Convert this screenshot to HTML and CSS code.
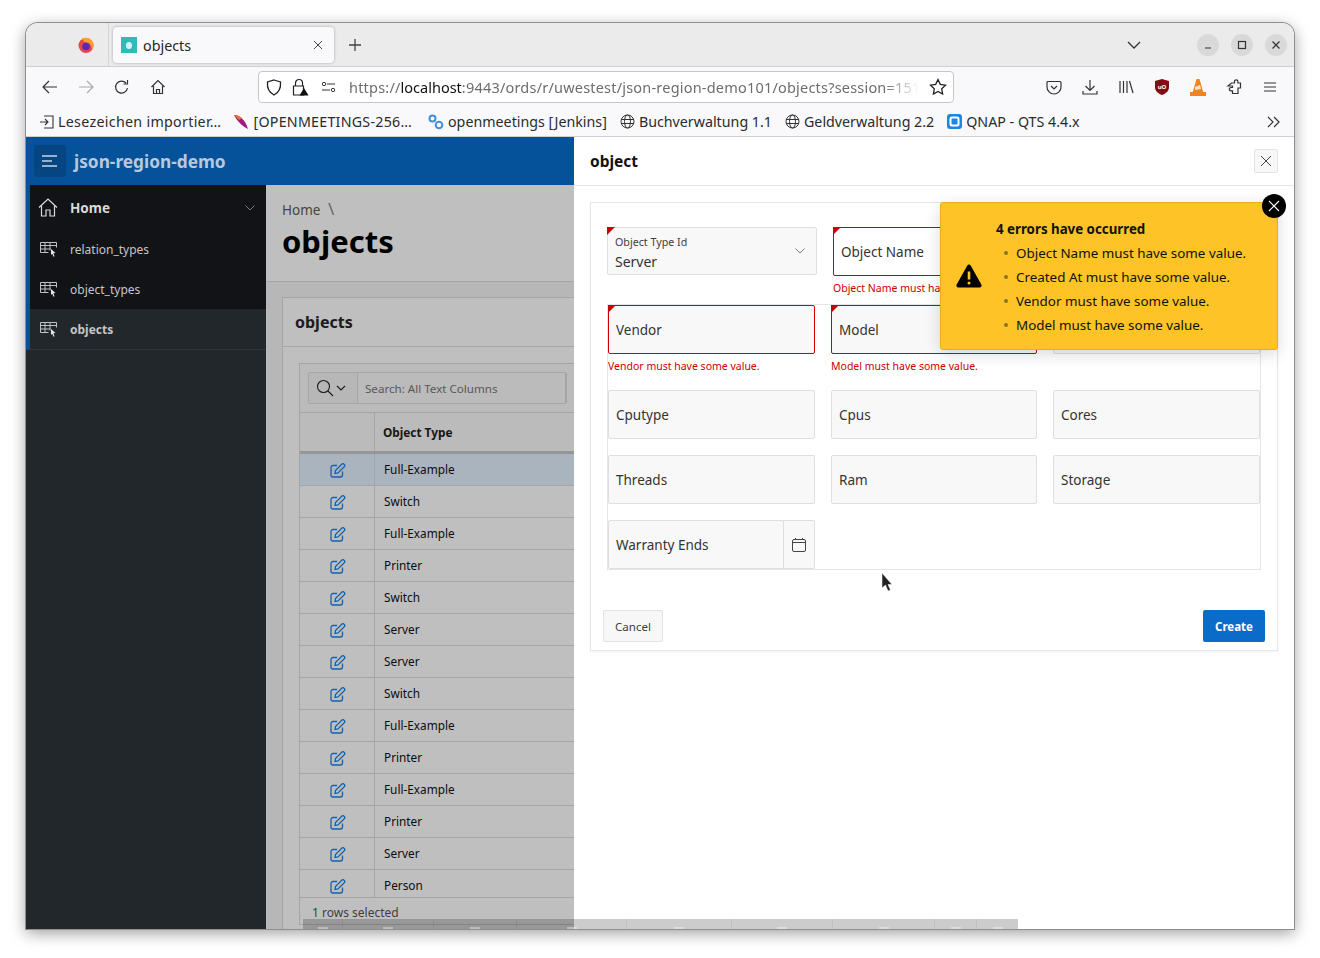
FILE: index.html
```html
<!DOCTYPE html>
<html>
 <head>
  <meta charset="utf-8">
  <title>objects</title>
  <link rel="stylesheet" href="styles.css">
 </head>
 <body>
  <div class="window">

   <div class="tabbar">
    <div class="tab-first">
     <svg width="18" height="18" viewBox="0 0 18 18"><circle cx="9" cy="9.500" r="7.500" fill="#e5474f"/><path d="M5 2.500c4-2 9-.5 11 4 1 3 .5 5.500-1 7.500 0-4-2-7-5-7.500-2-.3-4-1-5-4z" fill="#ff9f2e"/><circle cx="9" cy="10.500" r="3.800" fill="#5a2bb0"/></svg>
    </div>
    <div class="tab">
     <span class="favicon"><span class="favicon-dot"></span></span>
     <span class="tab-title">objects</span>
     <svg width="10" height="10" viewBox="0 0 10 10"><path d="M1 1l8 8M9 1l-8 8" stroke="#444" fill="none"/></svg>
    </div>
    <svg class="tab-plus" width="14" height="14" viewBox="0 0 14 14"><path d="M7 1v12M1 7h12" stroke="#444" stroke-width="1.300" fill="none"/></svg>
    <div class="grow"></div>
    <svg class="tab-list" width="14" height="8" viewBox="0 0 14 8"><path d="M1 1l6 6 6-6" stroke="#333" stroke-width="1.300" fill="none"/></svg>
    <div class="wm">
     <span class="wm-btn"><svg width="10" height="10" viewBox="0 0 10 10"><path d="M2 8h6" stroke="#333" stroke-width="1.200"/></svg></span>
     <span class="wm-btn"><svg width="10" height="10" viewBox="0 0 10 10"><rect x="1.500" y="1.500" width="7" height="7" stroke="#333" stroke-width="1.200" fill="none"/></svg></span>
     <span class="wm-btn"><svg width="10" height="10" viewBox="0 0 10 10"><path d="M1.500 1.500l7 7M8.500 1.500l-7 7" stroke="#333" stroke-width="1.200"/></svg></span>
    </div>
   </div>

   <div class="navbar">
    <svg width="16" height="14" viewBox="0 0 16 14"><path d="M15 7H2M7 1L1 7l6 6" stroke="#333" stroke-width="1.200" fill="none"/></svg>
    <svg width="16" height="14" viewBox="0 0 16 14"><path d="M1 7h13M9 1l6 6-6 6" stroke="#aaa" stroke-width="1.200" fill="none"/></svg>
    <svg width="16" height="16" viewBox="0 0 16 16"><path d="M13.500 9a6 6 0 1 1-1.500-5M13.500 1v4h-4" stroke="#333" stroke-width="1.200" fill="none"/></svg>
    <svg width="16" height="16" viewBox="0 0 16 16"><path d="M1.500 8L8 1.500 14.500 8M3.500 7v7.500h9V7M6.500 14.500v-4h3v4" stroke="#333" stroke-width="1.200" fill="none"/></svg>
    <div class="urlbar">
     <svg width="16" height="17" viewBox="0 0 16 17"><path d="M8 1l6.500 2c.5 6-1.500 10.500-6.500 13C3 13.500 1 9 1.500 3z" stroke="#222" stroke-width="1.300" fill="none"/></svg>
     <svg width="17" height="18" viewBox="0 0 17 18"><path d="M3.500 8V5a3.500 3.500 0 0 1 7 0v3M1.500 8h10v9h-10z" stroke="#222" stroke-width="1.200" fill="none"/><path d="M12 10l4.500 7.500h-9z" fill="#111"/></svg>
     <svg class="perm" width="15" height="10" viewBox="0 0 15 10"><path d="M6 2h8M1 8h8" stroke="#333" stroke-width="1.200"/><circle cx="3" cy="2" r="1.700" stroke="#333" fill="none"/><circle cx="12" cy="8" r="1.700" stroke="#333" fill="none"/></svg>
     <div class="url"><span class="url-dim">https://</span>localhost<span class="url-dim">:9443/ords/r/uwestest/json-region-demo101/objects?session=151</span></div>
     <svg width="18" height="18" viewBox="0 0 18 18"><path d="M9 1.500l2.300 4.900 5.200.7-3.800 3.700.9 5.300L9 13.500l-4.600 2.600.9-5.300L1.500 7.100l5.200-.7z" stroke="#222" stroke-width="1.300" fill="none"/></svg>
    </div>
    <div class="nav-right">
     <svg width="16" height="15" viewBox="0 0 16 15"><path d="M2 1.500h12a1 1 0 0 1 1 1V7a7 7 0 0 1-14 0V2.500a1 1 0 0 1 1-1z" stroke="#333" stroke-width="1.200" fill="none"/><path d="M5 6l3 3 3-3" stroke="#333" stroke-width="1.200" fill="none"/></svg>
     <svg width="16" height="16" viewBox="0 0 16 16"><path d="M8 1v10M3.500 7L8 11.500 12.500 7M1 12v3h14v-3" stroke="#333" stroke-width="1.200" fill="none"/></svg>
     <svg width="16" height="14" viewBox="0 0 16 14"><path d="M2 1v12M5.500 1v12M9 1v12M11.500 1l3.500 12" stroke="#333" stroke-width="1.200" fill="none"/></svg>
     <svg class="nr-narrow" width="14" height="16" viewBox="0 0 14 16"><path d="M7 0l7 2v6c0 4-3 6.500-7 8-4-1.500-7-4-7-8V2z" fill="#800f14"/><text x="7" y="9.500" class="ublock">uO</text></svg>
     <svg width="16" height="17" viewBox="0 0 16 17"><path d="M6.500 0h3l4 14h-11z" fill="#f58220"/><path d="M5 8l5-2 1 4-6 1z" fill="#fde3c8"/><path d="M0 13h16v4H0z" fill="#f58220"/></svg>
     <svg width="16" height="16" viewBox="0 0 16 16"><path d="M5.500 4h3V2.500a1.700 1.700 0 0 1 3.400 0V4h2.600v5h-2.500v5.500H6.500v-2.600H5a1.700 1.700 0 0 1 0-3.400h1.500V7H2z" stroke="#333" stroke-width="1.200" fill="none"/></svg>
     <svg class="nr-narrow" width="14" height="10" viewBox="0 0 14 10"><path d="M1 1h12M1 5h12M1 9h12" stroke="#333" stroke-width="1.200"/></svg>
    </div>
   </div>

   <div class="bookmarks">
    <div class="bm bm-first">
     <svg width="15" height="14" viewBox="0 0 15 14"><path d="M1 7h8M6 4l3 3-3 3M5 1h9v12H5" stroke="#333" stroke-width="1.100" fill="none"/></svg>
     <span>Lesezeichen importier…</span>
    </div>
    <div class="bm bm-second">
     <svg width="15" height="16" viewBox="0 0 15 16"><path d="M0 1c5 0 11 4 14 14C9 13 3 7 0 1z" fill="#a3197c"/><path d="M0 1c3 0 6 1 8 3L5 6z" fill="#e8772e"/></svg>
     <span>[OPENMEETINGS-256…</span>
    </div>
    <div class="bm">
     <svg width="16" height="16" viewBox="0 0 16 16"><circle cx="4.500" cy="4.500" r="3" stroke="#3f8fe0" stroke-width="2" fill="none"/><circle cx="11" cy="11" r="3.300" stroke="#3f8fe0" stroke-width="2" fill="none"/></svg>
     <span>openmeetings [Jenkins]</span>
    </div>
    <div class="bm">
     <svg class="globe" width="15" height="15" viewBox="0 0 15 15"><circle cx="7.500" cy="7.500" r="6.500"/><ellipse cx="7.500" cy="7.500" rx="3" ry="6.500"/><path d="M1 5.500h13M1 9.500h13"/></svg>
     <span>Buchverwaltung 1.1</span>
    </div>
    <div class="bm">
     <svg class="globe" width="15" height="15" viewBox="0 0 15 15"><circle cx="7.500" cy="7.500" r="6.500"/><ellipse cx="7.500" cy="7.500" rx="3" ry="6.500"/><path d="M1 5.500h13M1 9.500h13"/></svg>
     <span>Geldverwaltung 2.2</span>
    </div>
    <div class="bm">
     <svg width="15" height="15" viewBox="0 0 15 15"><rect width="15" height="15" rx="3" fill="#1a87e8"/><rect x="3.500" y="3.500" width="8" height="8" rx="1.500" stroke="#fff" stroke-width="2" fill="none"/></svg>
     <span>QNAP - QTS 4.4.x</span>
    </div>
    <div class="grow"></div>
    <svg width="14" height="12" viewBox="0 0 14 12"><path d="M1 1l5 5-5 5M7 1l5 5-5 5" stroke="#333" stroke-width="1.200" fill="none"/></svg>
   </div>

   <div class="content">
    <div class="apex">
     <div class="apex-head">
      <span class="burger"><svg width="16" height="12" viewBox="0 0 16 12"><path d="M0 1h15M0 6h10M0 11h15" stroke="#c8d5e2" stroke-width="1.600"/></svg></span>
      <span class="app-name">json-region-demo</span>
     </div>
     <div class="apex-body">
      <div class="sidebar">
       <div class="side-top">
        <div class="side-item side-home">
         <svg width="20" height="19" viewBox="0 0 20 19"><path d="M1 9.500L10 1l9 8.500M3.500 8v10h4.500v-6h4v6h4.500V8" stroke="#d8dadb" stroke-width="1.200" fill="none"/></svg>
         <span class="side-home-label">Home</span>
         <svg class="side-chev" width="10" height="6" viewBox="0 0 10 6"><path d="M.5.500L5 5l4.500-4.500" stroke="#777" fill="none"/></svg>
        </div>
        <div class="side-item">
         <svg class="report" width="17" height="15" viewBox="0 0 17 15"><path d="M.5.500h16M.5 3.500h16M.5 7h10M.5 10.500h8M.5.500v10M5 .5v10M10 .5v8M16.500.5v5"/><path class="cursor" d="M11 7l4.500 4-2 .3 1 3-1 .4-1.200-3-1.300 1.300z"/></svg>
         <span>relation_types</span>
        </div>
        <div class="side-item">
         <svg class="report" width="17" height="15" viewBox="0 0 17 15"><path d="M.5.500h16M.5 3.500h16M.5 7h10M.5 10.500h8M.5.500v10M5 .5v10M10 .5v8M16.500.5v5"/><path class="cursor" d="M11 7l4.500 4-2 .3 1 3-1 .4-1.200-3-1.300 1.300z"/></svg>
         <span>object_types</span>
        </div>
       </div>
       <div class="side-item side-current">
        <svg class="report" width="17" height="15" viewBox="0 0 17 15"><path d="M.5.500h16M.5 3.500h16M.5 7h10M.5 10.500h8M.5.500v10M5 .5v10M10 .5v8M16.500.5v5"/><path class="cursor" d="M11 7l4.500 4-2 .3 1 3-1 .4-1.200-3-1.300 1.300z"/></svg>
        <span>objects</span>
       </div>
      </div>
      <div class="page">
       <div class="page-head">
        <div class="crumb">Home <span class="crumb-sep">\</span></div>
        <h1>objects</h1>
       </div>
       <div class="region">
        <div class="region-head">objects</div>
        <div class="region-body">
         <div class="ig">
          <div class="ig-tools">
           <div class="ig-search">
            <span class="ig-lens">
             <svg width="18" height="18" viewBox="0 0 18 18"><circle cx="7.500" cy="7.500" r="6" stroke="#222" stroke-width="1.100" fill="none"/><path d="M12 12l5 5" stroke="#222" stroke-width="1.100"/></svg>
             <svg width="10" height="6" viewBox="0 0 10 6"><path d="M1 1l4 4 4-4" stroke="#222" stroke-width="1.100" fill="none"/></svg>
            </span>
            <span class="ig-input">Search: All Text Columns</span>
           </div>
          </div>
          <div class="ig-head">
           <div class="c-edit"></div>
           <div class="c-type">Object Type</div>
          </div>
          <div id="rows"></div>
          <div class="ig-foot">1 rows selected</div>
         </div>
        </div>
       </div>
       <div class="scrim"></div>
      </div>
     </div>
    </div>

    <div class="dialog">
     <div class="dialog-head">
      <span class="dialog-title">object</span>
      <span class="dialog-close"><svg width="12" height="12" viewBox="0 0 12 12"><path d="M1 1l10 10M11 1L1 11" stroke="#444" fill="none"/></svg></span>
     </div>
     <div class="dialog-body">
      <div class="card">
       <div class="row-one">
        <div class="field field-select field-req">
         <div class="float-label">Object Type Id</div>
         <div class="float-value">Server</div>
         <svg class="select-chev" width="10" height="6" viewBox="0 0 10 6"><path d="M.5.500L5 5l4.500-4.500" stroke="#777" fill="none"/></svg>
        </div>
        <div class="col-err">
         <div class="field field-white field-bad field-req">Object Name</div>
         <div class="err err-first">Object Name must have some value.</div>
        </div>
       </div>
       <div class="grid-box">
        <div class="grid-row">
         <div class="col-err">
          <div class="field field-bad field-req">Vendor</div>
          <div class="err">Vendor must have some value.</div>
         </div>
         <div class="col-err">
          <div class="field field-bad field-req">Model</div>
          <div class="err">Model must have some value.</div>
         </div>
         <div class="col-err">
          <div class="field"></div>
         </div>
        </div>
        <div class="grid-row">
         <div class="field">Cputype</div>
         <div class="field">Cpus</div>
         <div class="field">Cores</div>
        </div>
        <div class="grid-row">
         <div class="field">Threads</div>
         <div class="field">Ram</div>
         <div class="field">Storage</div>
        </div>
        <div class="grid-row grid-last">
         <div class="date-field">
          <div class="field date-input">Warranty Ends</div>
          <div class="date-btn"><svg width="14" height="14" viewBox="0 0 14 14"><rect x=".5" y="1.500" width="13" height="12" rx="1.500" stroke="#444" fill="none"/><path d="M.5 4.500h13M3.500 0v2M10.500 0v2" stroke="#444" fill="none"/></svg></div>
         </div>
        </div>
       </div>
       <div class="dialog-btns">
        <span class="btn-cancel">Cancel</span>
        <span class="btn-create">Create</span>
       </div>
      </div>
     </div>
    </div>

    <div class="toast">
     <svg class="toast-ico" width="26" height="24" viewBox="0 0 26 24"><path d="M11.300 1.500a2 2 0 0 1 3.400 0l10.600 19a2 2 0 0 1-1.700 3H2.400a2 2 0 0 1-1.700-3z" fill="#000"/><path d="M13 7.500v8" stroke="#fec326" stroke-width="2.600"/><circle cx="13" cy="19" r="1.500" fill="#fec326"/></svg>
     <div class="toast-text">
      <div class="toast-title">4 errors have occurred</div>
      <ul>
       <li>Object Name must have some value.</li>
       <li>Created At must have some value.</li>
       <li>Vendor must have some value.</li>
       <li>Model must have some value.</li>
      </ul>
     </div>
     <span class="toast-close"><svg width="12" height="12" viewBox="0 0 12 12"><path d="M1 1l10 10M11 1L1 11" stroke="#fff" stroke-width="1.200"/></svg></span>
    </div>

    <svg class="pointer" width="12" height="19" viewBox="0 0 12 19"><path d="M1 0v15l3.500-3 2.500 6 2.500-1-2.500-5.500H11z" fill="#222" stroke="#fff" stroke-width=".5"/></svg>

    <div class="float-bar">
     <span class="fb-cell fb-a"><i></i></span><span class="fb-cell fb-b"><i></i></span><span class="fb-cell fb-c"><i></i></span><span class="fb-cell fb-d"><i></i></span><span class="fb-cell fb-e"><i></i></span><span class="fb-cell fb-f"><i></i></span><span class="fb-cell fb-g"><i></i></span><span class="fb-cell fb-h"><i></i></span><span class="fb-cell fb-i"><i></i></span>
    </div>
   </div>
  </div>
  <script src="rows.js"></script>
 </body>
</html>
```

FILE: rows.js
```js
var types = ["Full-Example", "Switch", "Full-Example", "Printer", "Switch", "Server", "Server",
  "Switch", "Full-Example", "Printer", "Full-Example", "Printer", "Server", "Person"];
var box = document.getElementById("rows");
types.forEach(function (t, i) {
  var row = document.createElement("div");
  row.className = i == 0 ? "ig-row ig-row-sel" : "ig-row";
  row.innerHTML = '<div class="c-edit"><svg width="16" height="15" viewBox="0 0 16 15">' +
    '<path d="M7 2.500H3a2 2 0 0 0-2 2V12a2 2 0 0 0 2 2h7.500a2 2 0 0 0 2-2V8.500" stroke="#1f80e6" stroke-width="1.300" fill="none"/>' +
    '<path d="M5.500 7.500L12 1a1.200 1.200 0 0 1 1.800 0l.7.700a1.200 1.200 0 0 1 0 1.800L8 10l-3 .5z" stroke="#1f80e6" stroke-width="1.300" fill="none"/></svg></div>' +
    '<div class="c-type">' + t + '</div>';
  box.appendChild(row);
});
```

FILE: styles.css
```css
* { box-sizing: border-box; }
html, body { margin: 0; height: 100%; background: #fff; overflow: hidden; }
body { padding: 23px 26px 29px; font-family: "Noto Sans", sans-serif; color: #262626; }
svg { display: block; flex: none; }
.grow { flex: 1; }

/* browser window */
.window {
 height: 906px;
 border-radius: 12px 12px 0 0;
 overflow: hidden;
 display: flex;
 flex-direction: column;
 background: #f9f9fb;
 box-shadow: 0 0 0 1px #8f8f8f, 0 4px 16px rgba(0,0,0,.4);
}
.tabbar {
 height: 44px;
 flex: none;
 display: flex;
 align-items: center;
 background: #ebebeb;
 border-bottom: 1px solid #cfcfcf;
}
.tab-first {
 width: 83px; height: 43px;
 display: flex; align-items: center;
 padding-left: 51px;
 border-right: 1px solid #d4d4d4;
}
.tab {
 width: 221px; height: 36px; margin: 1px 0 0 4px;
 display: flex; align-items: center;
 background: #f9f9fb; border-radius: 4px;
 box-shadow: 0 0 3px rgba(0,0,0,.3);
 padding: 0 11px 0 8px;
}
.favicon { width: 16px; height: 16px; background: #2fbcb8; display: flex; align-items: center; justify-content: center; }
.favicon-dot { width: 6px; height: 7px; border-radius: 50%; background: #d8f3f2; }
.tab-title { flex: 1; margin-left: 6px; font-size: 14.300px; }
.tab-plus { margin-left: 14px; }
.tab-list { margin-right: 56px; }
.wm { display: flex; gap: 12px; margin-right: 7px; }
.wm-btn { width: 22px; height: 22px; border-radius: 50%; background: #d9d9d9; display: flex; align-items: center; justify-content: center; }

.navbar {
 height: 37px; flex: none;
 display: flex; align-items: center;
 padding: 3px 0 0 16px;
 gap: 20px;
}
.urlbar {
 width: 696px; height: 32px; margin-left: 72px;
 display: flex; align-items: center; gap: 10px;
 background: #fff; border: 1px solid #c6c6c8; border-radius: 4px;
 padding: 0 6px 0 7px;
}
.perm { margin-left: 2px; margin-right: 3px; }
.url { flex: 1; overflow: hidden; white-space: nowrap; font-size: 14.500px; color: #111; -webkit-mask-image: linear-gradient(to right, #000 94%, transparent); }
.url-dim { color: #6d6d6d; letter-spacing: .2px; }
.nav-right { display: flex; align-items: center; gap: 20px; margin-left: 72px; }
.nr-narrow { margin: 0 1px; }
.ublock { font: bold 6px "Noto Sans", sans-serif; fill: #fff; text-anchor: middle; }

.bookmarks {
 height: 33px; flex: none;
 display: flex; align-items: center;
 padding: 3px 13px 0;
 gap: 13px;
 border-bottom: 1px solid #cfcfcf;
 font-size: 14.250px; color: #2b2b2b;
}
.bm { display: flex; align-items: center; gap: 4px; white-space: nowrap; }
.bm-first span { letter-spacing: .3px; }
.bm-second { margin-right: 3px; }
.bm-second span { letter-spacing: .25px; }
.globe { fill: none; stroke: #333; stroke-width: 1; }

/* page under the dialog */
.content { flex: 1; position: relative; overflow: hidden; background: #fff; }
.apex { height: 100%; width: 548px; display: flex; flex-direction: column; overflow: hidden; }
.apex-head {
 height: 48px; flex: none;
 display: flex; align-items: center;
 padding-left: 8px;
 background: #05519a;
}
.burger { width: 32px; height: 32px; border-radius: 3px; background: #054682; display: flex; align-items: center; justify-content: center; }
.app-name { margin-left: 8px; font-size: 17.300px; font-weight: 700; color: #b9c9db; }
.apex-body { flex: 1; display: flex; min-height: 0; }
.sidebar { width: 240px; flex: none; background: #22272b; }
.side-top { background: #121317; border-left: 4px solid #05519a; }
.side-item {
 height: 40px;
 display: flex; align-items: center;
 padding-left: 10px;
 font-size: 12px; color: #c3c6c8;
 gap: 13px;
}
.side-item span { white-space: nowrap; }
.side-home { height: 44px; padding: 1px 0 0 8px; gap: 12px; position: relative; }
.side-home-label { font-size: 13.500px; font-weight: 700; color: #d8dadb; }
.side-chev { position: absolute; right: 11px; top: 20px; }
.report { fill: none; stroke: #bfc2c4; stroke-width: 1; }
.report .cursor { fill: #e6e6e6; stroke: none; }
.side-current {
 border-left: 4px solid #05519a;
 border-bottom: 1px solid #30353a;
 font-weight: 700;
 height: 41px;
}
.page { flex: 1; background: #f5f5f5; min-width: 0; position: relative; }
.page-head { height: 97px; background: #fff; border-bottom: 1px solid #dcdcdc; padding: 15px 16px 0; }
.crumb { font-size: 13.500px; color: #5b5b5b; line-height: 18px; height: 18px; }
.crumb-sep { color: #8a8a8a; font-size: 17px; margin-left: 4px; line-height: 18px; }
h1 { margin: 3px 0 0; font-size: 31px; line-height: 40px; font-weight: 700; color: #000; }
.region { margin: 15px 0 0 16px; background: #fff; border: 1px solid #dcdcdc; border-right: 0; height: 800px; }
.region-head { height: 49px; display: flex; align-items: center; padding-left: 12px; font-size: 16px; font-weight: 700; border-bottom: 1px solid #dcdcdc; }
.region-body { padding: 16px 0 0 16px; }
.ig { border: 1px solid #dcdcdc; border-right: 0; }
.ig-tools { height: 49px; padding: 8px; border-bottom: 1px solid #dcdcdc; background: #fafafa; }
.ig-search { height: 32px; display: flex; border: 1px solid #dcdcdc; border-radius: 2px; width: 259px; }
.ig-lens { width: 49px; display: flex; align-items: center; gap: 2px; padding-left: 7px; border-right: 1px solid #dcdcdc; background: #f5f5f5; }
.ig-input { flex: 1; display: flex; align-items: center; padding-left: 7px; font-size: 11.600px; color: #777; border-right: 1px solid #dcdcdc; white-space: nowrap; }
.ig-head { height: 41px; display: flex; border-bottom: 3px solid #c9c9c9; background: #fafafa; font-size: 11.800px; font-weight: 700; color: #222; }
.ig-head .c-edit { border-right: 1px solid #dcdcdc; }
.c-edit { width: 75px; flex: none; display: flex; align-items: center; justify-content: center; }
.c-type { flex: 1; display: flex; align-items: center; padding-left: 8px; white-space: nowrap; }
.ig-row { height: 32px; display: flex; border-bottom: 1px solid #dcdcdc; font-size: 11.800px; color: #111; background: #fff; overflow: hidden; }
.ig-row .c-edit { height: 31px; padding: 1px 0 0 2px; border-right: 1px solid #dcdcdc; }
.ig-row .c-type { height: 31px; padding: 0 0 2px 9px; }
.ig-row:last-child { height: 28px; }
.ig-row-sel { background: #e2f0fe; }
.ig-foot { height: 26px; padding: 6px 0 0 12px; font-size: 12px; color: #555; white-space: nowrap; }
.scrim { position: absolute; inset: 0; background: rgba(0,0,0,.25); pointer-events: none; }

/* dialog */
.dialog { position: absolute; left: 548px; top: 0; right: 0; bottom: 0; background: #fff; }
.dialog-head {
 height: 49px;
 display: flex; align-items: center; justify-content: space-between;
 padding: 0 16px;
 border-bottom: 1px solid #e6e6e6;
}
.dialog-title { font-size: 15.500px; font-weight: 700; color: #111; }
.dialog-close { width: 24px; height: 24px; background: #f7f7f7; border: 1px solid #e3e3e3; border-radius: 2px; display: flex; align-items: center; justify-content: center; }
.dialog-body { padding: 16px; }
.card { height: 449px; border: 1px solid #e6e6e6; box-shadow: 0 1px 2px rgba(0,0,0,.05); padding: 24px 12px 0 12px; position: relative; }
.row-one { height: 77px; display: flex; gap: 16px; padding-left: 4px; }
.field {
 height: 49px; display: flex; align-items: center;
 padding: 0 7px;
 background: #f8f8f8; border: 1px solid #dfdfdf; border-radius: 2px;
 font-size: 13.500px; color: #333; position: relative;
}
.field-req::before {
 content: ""; position: absolute; left: -1px; top: -1px;
 border-top: 8px solid #c00; border-right: 8px solid transparent;
}
.field-white { background: #fff; }
.field-bad { border-color: #c00; }
.field-select { width: 210px; height: 48px; display: block; padding: 6px 7px 0; }
.float-label { font-size: 10.700px; line-height: 16px; color: #404040; }
.float-value { font-size: 14px; line-height: 20px; margin-top: 2px; color: #333; }
.select-chev { position: absolute; right: 11px; top: 20px; }
.col-err { min-width: 0; }
.row-one .col-err { width: 320px; }
.err { font-size: 10.500px; line-height: 16px; margin-top: 4px; color: #c00; white-space: nowrap; }
.grid-box { width: 654px; height: 266px; border: 1px solid #e6e6e6; margin-left: 4px; }
.grid-row { display: grid; grid-template-columns: 207px 206px 207px; gap: 16px; margin-bottom: 16px; }
.grid-row:first-child { height: 69px; }
.grid-last { margin-bottom: 0; }
.date-field { display: flex; }
.date-input { flex: 1; border-radius: 2px 0 0 2px; }
.date-btn { width: 31px; height: 49px; background: #f8f8f8; border: 1px solid #dfdfdf; border-left: 0; border-radius: 0 2px 2px 0; display: flex; align-items: center; justify-content: center; }
.dialog-btns { display: flex; justify-content: space-between; margin-top: 40px; }
.btn-cancel, .btn-create { height: 32px; display: flex; align-items: center; justify-content: center; font-size: 11.500px; border-radius: 2px; }
.btn-cancel { width: 60px; background: #f7f7f7; border: 1px solid #e3e3e3; color: #404040; }
.btn-create { width: 62px; background: #0a6bc9; color: #fff; font-weight: 700; }

/* error toast */
.toast {
 position: absolute; left: 914px; top: 65px;
 width: 338px; height: 148px;
 background: #fec326; border: 1px solid #e6ae1c; border-radius: 3px;
 box-shadow: 0 4px 16px rgba(0,0,0,.15);
 display: flex; align-items: center;
 color: #111;
}
.toast-ico { margin-left: 15px; }
.toast-text { margin-left: 14px; padding-top: 2px; font-size: 13.400px; line-height: 24px; }
.toast-title { font-weight: 700; font-size: 13.300px; }
.toast ul { margin: 0; padding: 0 0 0 8px; list-style: none; }
.toast li { display: flex; align-items: center; gap: 8px; }
.toast li::before { content: ""; width: 4px; height: 4px; border-radius: 50%; background: #8c7326; }
.toast-close { position: absolute; right: -9px; top: -9px; width: 24px; height: 24px; border-radius: 50%; background: #000; display: flex; align-items: center; justify-content: center; }

.pointer { position: absolute; left: 855px; top: 436px; }

/* floating bar cut off by the window edge, only icon tops show */
.float-bar { position: absolute; left: 277px; bottom: 0; width: 715px; height: 10px; display: flex; background: rgba(0,0,0,.2); }
.fb-cell { display: flex; align-items: flex-end; justify-content: center; border-right: 1px solid rgba(0,0,0,.06); }
.fb-cell i { width: 10px; height: 2px; background: rgba(255,255,255,.35); }
.fb-a { width: 40px; } .fb-b { width: 91px; } .fb-c { width: 83px; } .fb-d { width: 110px; }
.fb-e { width: 105px; } .fb-f { width: 101px; } .fb-g { width: 102px; } .fb-h { width: 42px; } .fb-i { width: 41px; border-right: 0; }
```
